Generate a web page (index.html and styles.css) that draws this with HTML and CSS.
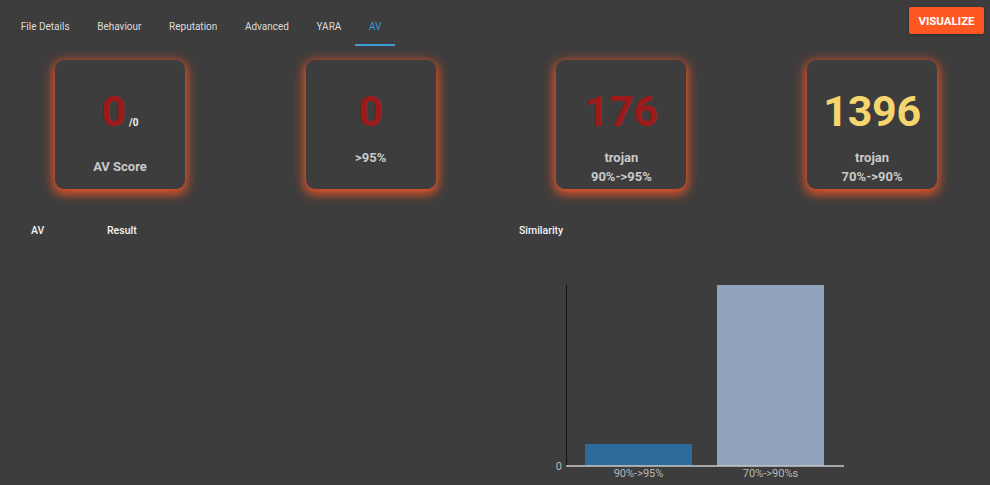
FILE: index.html
```html
<!DOCTYPE html>
<html>
<head>
<meta charset="utf-8">
<link rel="stylesheet" href="styles.css">
</head>
<body>
<header class="topbar">
  <nav class="tabs">
    <span class="tab">File Details</span>
    <span class="tab">Behaviour</span>
    <span class="tab">Reputation</span>
    <span class="tab">Advanced</span>
    <span class="tab">YARA</span>
    <span class="tab active">AV</span>
  </nav>
  <button class="viz">VISUALIZE</button>
</header>

<section class="cards">
  <div class="card">
    <div class="num red">0<span class="of">/0</span></div>
    <div class="lbl lbl-score">AV Score</div>
  </div>
  <div class="card">
    <div class="num red">0</div>
    <div class="lbl">&gt;95%</div>
  </div>
  <div class="card">
    <div class="num red">176</div>
    <div class="lbl">trojan</div>
    <div class="lbl">90%-&gt;95%</div>
  </div>
  <div class="card">
    <div class="num yellow">1396</div>
    <div class="lbl">trojan</div>
    <div class="lbl">70%-&gt;90%</div>
  </div>
</section>

<section class="panels">
  <div class="panel panel-left">
    <div class="thead">
      <span class="th th-av">AV</span>
      <span class="th">Result</span>
    </div>
  </div>
  <div class="panel panel-right">
    <div class="thead thead-right">
      <span class="th">Similarity</span>
    </div>
    <svg class="chart" width="340" height="215" viewBox="0 0 340 215">
      <line x1="26.5" y1="15" x2="26.5" y2="196" stroke="#111" stroke-width="1"/>
      <rect x="45" y="174" width="107" height="22" fill="#2f6b9b"/>
      <rect x="177" y="15" width="107" height="181" fill="#8fa3bd"/>
      <line x1="26" y1="196" x2="304" y2="196" stroke="#c9c9c9" stroke-width="1.5"/>
      <text x="22" y="200" class="axis" text-anchor="end">0</text>
      <text x="98.5" y="207" class="axis" text-anchor="middle">90%-&gt;95%</text>
      <text x="230.5" y="207" class="axis" text-anchor="middle">70%-&gt;90%s</text>
    </svg>
  </div>
</section>
</body>
</html>
```
FILE: styles.css
```css
html, body {
  margin: 0;
  padding: 0;
  background: #3d3d3d;
  font-family: Roboto, "Liberation Sans", Arial, sans-serif;
  overflow: hidden;
  width: 990px;
  height: 485px;
}

.topbar {
  display: flex;
  justify-content: space-between;
  align-items: flex-start;
  padding: 0 6px 0 7px;
  height: 46px;
}

.tabs {
  display: flex;
  height: 46px;
}

.tab {
  box-sizing: border-box;
  padding: 21px 13.8px 0;
  height: 46px;
  font-size: 10px;
  color: #dcdcdc;
}

.tab.active {
  color: #3f9ad6;
  border-bottom: 2px solid #3f9ad6;
}

.viz {
  margin-top: 7px;
  width: 75px;
  height: 27px;
  border: none;
  border-radius: 2px;
  background: #ff5722;
  color: #fff;
  font-family: Roboto, "Liberation Sans", Arial, sans-serif;
  font-weight: 700;
  font-size: 11.5px;
  padding: 0;
  box-shadow: 0 1px 3px rgba(0,0,0,0.3);
}

.cards {
  display: grid;
  grid-template-columns: repeat(4, 130px);
  column-gap: 120.7px;
  padding: 14px 0 0 55px;
  height: 155px;
  box-sizing: border-box;
}

.card {
  width: 130px;
  height: 129px;
  border-radius: 9px;
  background: #3d3d3d;
  box-shadow: 0 3px 11px 2px rgba(255, 87, 34, 0.9);
  display: flex;
  flex-direction: column;
  align-items: center;
  box-sizing: border-box;
  padding-top: 25px;
}

.num {
  font-size: 43px;
  font-weight: 700;
  line-height: 52px;
  height: 52px;
  letter-spacing: -0.3px;
}

.red { color: #9e1a1a; }
.yellow { color: #f6d56f; }

.of {
  font-size: 10px;
  color: #f2f2f2;
  margin-left: 3px;
  letter-spacing: 0;
}

.lbl {
  font-size: 13px;
  font-weight: 700;
  color: #c9c9c9;
  line-height: 19px;
}

.num + .lbl {
  margin-top: 11px;
}

.num + .lbl-score {
  margin-top: 20px;
}

.panels {
  display: grid;
  grid-template-columns: 1fr 1fr;
  column-gap: 26px;
  padding: 15px 7px 0;
}

.panel {
  height: 290px;
  border: 1px solid rgba(0, 0, 0, 0.04);
  border-bottom: none;
  box-sizing: border-box;
  background: #3d3d3d;
}

.thead {
  display: flex;
  padding: 7px 0 0 23px;
  height: 20px;
}

.thead-right {
  padding-left: 10px;
}

.th {
  font-size: 10.5px;
  font-weight: 500;
  color: #f2f2f2;
}

.th-av {
  width: 76px;
}

.chart {
  display: block;
  margin: 26px 0 0 31px;
}

.axis {
  font-family: Roboto, "Liberation Sans", Arial, sans-serif;
  font-size: 11px;
  fill: #b8b8b8;
}
```
